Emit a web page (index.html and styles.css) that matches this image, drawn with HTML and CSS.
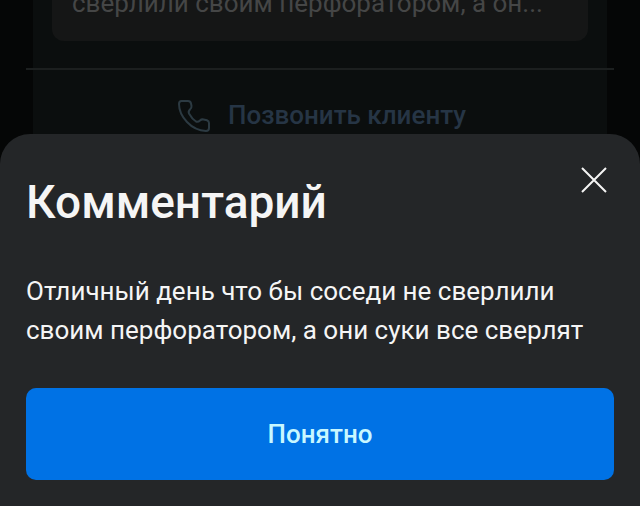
FILE: index.html
```html
<!DOCTYPE html>
<html lang="ru">

<head>
  <meta charset="UTF-8">
  <meta name="viewport" content="width=device-width, initial-scale=1.0">
  <title>Комментарий</title>
  <link rel="stylesheet" href="styles.css">
</head>

<body>
  <main class="order">
    <div class="order__body">
      <p class="order__comment">сверлили своим перфоратором, а он...</p>
    </div>
    <hr class="order__line">
    <div class="order__footer">
      <a href="tel:" class="order__call">
        <svg class="order__icon" viewBox="0 0 32 32" aria-hidden="true">
          <path d="M3.500 1H10Q12.500 1 13 3.500L13.500 6Q13.800 8 12 9.500Q10 11.500 11 13.500Q14 19 18 21.500Q20 22.500 22 20.500Q23.500 19 25.500 19.500L29 20.300Q31 21 31 23V28Q31 31 28 31Q17 30.500 9 22Q1 13.500 1 4Q1 1 3.500 1Z" />
        </svg>
        <span>Позвонить клиенту</span>
      </a>
    </div>
  </main>

  <!-- модалка -->
  <div class="modal" role="dialog" aria-modal="true" aria-labelledby="modal-title">
    <div class="modal__header">
      <h1 class="modal__title" id="modal-title">Комментарий</h1>
      <button type="button" class="modal__close" aria-label="Закрыть">
        <svg class="modal__cross" viewBox="0 0 28 28" aria-hidden="true">
          <path d="M2 2L26 26M26 2L2 26" />
        </svg>
      </button>
    </div>
    <p class="modal__text">Отличный день что бы соседи не сверлили своим перфоратором, а они суки все сверлят</p>
    <button type="button" class="btn">Понятно</button>
  </div>
</body>

</html>
```
FILE: styles.css
```css
* {
  box-sizing: border-box;
}

body {
  margin: 0;
  min-height: 100vh;
  overflow: hidden;
  background-color: #050606;
  font-family: Roboto, "Liberation Sans", sans-serif;
  font-size: 26px;
  line-height: 39px;
}

.order {
  padding: 0 26px;
}

.order__body,
.order__footer {
  margin: 0 7px;
  background-color: #0b0e0e;
}

.order__body {
  padding: 0 19px 27px;
}

/* страница прокручена, верх карточки за экраном */
.order__comment {
  margin: -16px 0 0;
  padding: 0 20px 18px;
  overflow: hidden;
  background-color: #151616;
  border-radius: 0 0 12px 12px;
  color: #454646;
  white-space: nowrap;
  text-overflow: ellipsis;
}

.order__line {
  height: 2px;
  margin: 0;
  border: none;
  background-color: #1c1f1f;
}

.order__footer {
  display: flex;
  justify-content: center;
  padding: 26px 0 80px;
}

.order__call {
  display: flex;
  align-items: center;
  gap: 18px;
  padding-left: 4px;
  color: #263545;
  font-weight: 500;
  text-decoration: none;
}

.order__icon {
  width: 32px;
  height: 32px;
  fill: none;
  stroke: #2c3a42;
  stroke-width: 2;
}

.modal {
  position: fixed;
  right: 0;
  bottom: 0;
  left: 0;
  padding: 32px 26px 26px;
  background-color: #242628;
  border-radius: 30px 30px 0 0;
  color: #f5f5f5;
}

.modal__header {
  display: flex;
  justify-content: space-between;
  align-items: flex-start;
}

.modal__title {
  margin: 8px 0 0;
  font-size: 46px;
  font-weight: 500;
  line-height: 56px;
}

.modal__close {
  display: flex;
  padding: 0;
  margin-right: 6px;
  border: none;
  background-color: transparent;
  cursor: pointer;
}

.modal__cross {
  width: 28px;
  height: 28px;
  fill: none;
  stroke: #f5f5f5;
  stroke-width: 2;
}

.modal__text {
  margin: 42px 0 38px;
}

.btn {
  display: block;
  width: 100%;
  height: 92px;
  border: none;
  border-radius: 10px;
  background-color: #0072e5;
  color: #c8f7ff;
  font-family: inherit;
  font-size: 26px;
  font-weight: 500;
  cursor: pointer;
}
```
